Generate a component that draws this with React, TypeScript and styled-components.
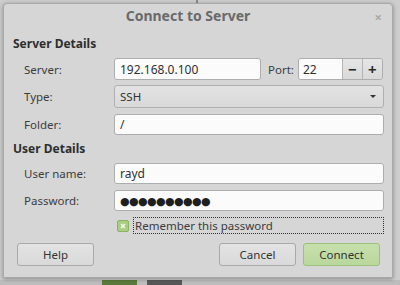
import React, { useState } from "react";
import styled, { createGlobalStyle } from "styled-components";

const GlobalStyle = createGlobalStyle`
    html, body {
        margin: 0;
        padding: 0;
        width: 400px;
        height: 285px;
        overflow: hidden;
    }
    body {
        font-family: "Noto Sans", "DejaVu Sans", sans-serif;
        font-size: 11.5px;
        color: #3a3a3a;
    }
`;

const Desktop = styled.div`
    width: 400px;
    height: 285px;
    box-sizing: border-box;
    padding: 3px 7px 0 3px;
    background:
        linear-gradient(to right, transparent 196px, #8a8a8a 196px, #8a8a8a 198px, transparent 198px) top / 100% 4px no-repeat,
        linear-gradient(to right, #bdbdbd 102px, #5b7b3c 102px, #5b7b3c 137px, #bdbdbd 137px, #bdbdbd 147px, #585858 147px, #585858 182px, #bdbdbd 182px) bottom / 100% 5px no-repeat,
        #cdcdcd;
`;

const Window = styled.div`
    width: 390px;
    height: 275px;
    box-sizing: border-box;
    border: 1px solid #a9a9a9;
    border-radius: 4px 4px 0 0;
    background: #d6d6d6;
    box-shadow: 0 1px 4px rgba(0, 0, 0, 0.35);
    display: flex;
    flex-direction: column;
`;

const TitleBar = styled.div`
    height: 23px;
    display: flex;
    align-items: center;
    justify-content: center;
    padding-right: 20px;
    position: relative;
`;

const Title = styled.span`
    font-size: 14px;
    font-weight: bold;
    color: #6a6a6a;
`;

const Close = styled.span`
    position: absolute;
    right: 10px;
    top: 4px;
    font-size: 13px;
    color: #a8a8a8;
    font-weight: bold;
`;

const Body = styled.div`
    flex: 1;
    display: flex;
    flex-direction: column;
    padding: 0 8px 10px 9px;
`;

const SectionTitle = styled.div<{ $top: number }>`
    margin-top: ${(p) => p.$top}px;
    height: 18px;
    line-height: 18px;
    font-size: 12px;
    font-weight: bold;
    color: #2e2e2e;
`;

const Row = styled.div<{ $top: number; $h?: number }>`
    margin-top: ${(p) => p.$top}px;
    height: ${(p) => p.$h || 21}px;
    display: grid;
    grid-template-columns: 101px 1fr;
    align-items: center;
`;

const Label = styled.label`
    padding-left: 11px;
    color: #3c3c3c;
`;

const Field = styled.div`
    display: flex;
    align-items: center;
    height: 100%;
`;

const Entry = styled.div<{ $w?: number }>`
    ${(p) => (p.$w ? `width: ${p.$w}px;` : "flex: 1;")}
    height: 100%;
    box-sizing: border-box;
    border: 1px solid #adadad;
    border-radius: 3px;
    background: #fbfbfb;
    padding: 0 5px;
    display: flex;
    align-items: center;
    color: #303030;
    font-size: 12px;
`;

const PortLabel = styled.span`
    margin: 0 4px 0 7px;
    color: #3c3c3c;
`;

const Spin = styled.div`
    display: flex;
    height: 100%;
    width: 85px;
    box-sizing: border-box;
    border: 1px solid #adadad;
    border-radius: 3px;
    overflow: hidden;
`;

const SpinEntry = styled.div`
    flex: 1;
    background: #fbfbfb;
    padding: 0 4px;
    display: flex;
    align-items: center;
    font-size: 12px;
    color: #303030;
`;

const SpinButton = styled.div`
    width: 19px;
    border-left: 1px solid #b5b5b5;
    background: linear-gradient(#e6e6e6, #d9d9d9);
    display: flex;
    align-items: center;
    justify-content: center;
    font-size: 15px;
    font-weight: bold;
    color: #2a2a2a;
`;

const Combo = styled.div`
    flex: 1;
    height: 100%;
    box-sizing: border-box;
    border: 1px solid #b0b0b0;
    border-radius: 3px;
    background: linear-gradient(#e3e3e3, #d9d9d9);
    padding: 0 5px;
    display: flex;
    align-items: center;
    justify-content: space-between;
    color: #333;
`;

const Arrow = styled.span`
    width: 0;
    height: 0;
    border-left: 3px solid transparent;
    border-right: 3px solid transparent;
    border-top: 3px solid #333;
    margin-right: 2px;
`;

const Dots = styled.span`
    font-size: 11px;
    letter-spacing: -0.6px;
    color: #1e1e1e;
`;

const CheckRow = styled.div`
    margin-top: 6px;
    height: 17px;
    display: flex;
    align-items: center;
    padding-left: 104px;
`;

const Box = styled.span`
    width: 10px;
    height: 10px;
    border: 1px solid #8db265;
    border-radius: 2px;
    background: #a9cd82;
    display: flex;
    align-items: center;
    justify-content: center;
    margin-right: 4px;
`;

const Focus = styled.span`
    flex: 1;
    height: 100%;
    box-sizing: border-box;
    border: 1px dotted #333;
    display: flex;
    align-items: center;
    padding-left: 1px;
    color: #3c3c3c;
`;

const ButtonRow = styled.div`
    margin-top: 9px;
    height: 23px;
    display: flex;
    padding-left: 4px;
    padding-right: 4px;
`;

const Button = styled.button<{ $primary?: boolean }>`
    width: 77px;
    height: 23px;
    box-sizing: border-box;
    border: 1px solid ${(p) => (p.$primary ? "#9dc07a" : "#a9a9a9")};
    border-radius: 3px;
    background: ${(p) =>
        p.$primary
            ? "linear-gradient(#c6e0ad, #bad79c)"
            : "linear-gradient(#e3e3e3, #d9d9d9)"};
    font-family: inherit;
    font-size: 11.5px;
    color: #333;
    padding: 0;
`;

const Spacer = styled.div`
    flex: 1;
`;

const Gap = styled.div`
    width: 7px;
`;

const App = () => {
    const [remember, setRemember] = useState<boolean>(true);

    return (
        <Desktop>
            <GlobalStyle />
            <Window>
                <TitleBar>
                    <Title>Connect to Server</Title>
                    <Close>×</Close>
                </TitleBar>
                <Body>
                    <SectionTitle $top={8}>Server Details</SectionTitle>
                    <Row $top={5}>
                        <Label>Server:</Label>
                        <Field>
                            <Entry $w={147}>192.168.0.100</Entry>
                            <PortLabel>Port:</PortLabel>
                            <Spin>
                                <SpinEntry>22</SpinEntry>
                                <SpinButton>−</SpinButton>
                                <SpinButton>+</SpinButton>
                            </Spin>
                        </Field>
                    </Row>
                    <Row $top={6} $h={23}>
                        <Label>Type:</Label>
                        <Field>
                            <Combo>
                                SSH
                                <Arrow />
                            </Combo>
                        </Field>
                    </Row>
                    <Row $top={6}>
                        <Label>Folder:</Label>
                        <Field>
                            <Entry>/</Entry>
                        </Field>
                    </Row>
                    <SectionTitle $top={5}>User Details</SectionTitle>
                    <Row $top={5}>
                        <Label>User name:</Label>
                        <Field>
                            <Entry>rayd</Entry>
                        </Field>
                    </Row>
                    <Row $top={6}>
                        <Label>Password:</Label>
                        <Field>
                            <Entry>
                                <Dots>●●●●●●●●●●</Dots>
                            </Entry>
                        </Field>
                    </Row>
                    <CheckRow onClick={() => setRemember(!remember)}>
                        <Box>
                            {remember && (
                                <svg width="6" height="6" viewBox="0 0 6 6">
                                    <path
                                        d="M1 1L5 5M5 1L1 5"
                                        stroke="#f4f9ee"
                                        strokeWidth="1.6"
                                    />
                                </svg>
                            )}
                        </Box>
                        <Focus>Remember this password</Focus>
                    </CheckRow>
                    <ButtonRow>
                        <Button>Help</Button>
                        <Spacer />
                        <Button>Cancel</Button>
                        <Gap />
                        <Button $primary>Connect</Button>
                    </ButtonRow>
                </Body>
            </Window>
        </Desktop>
    );
};

export default App;
